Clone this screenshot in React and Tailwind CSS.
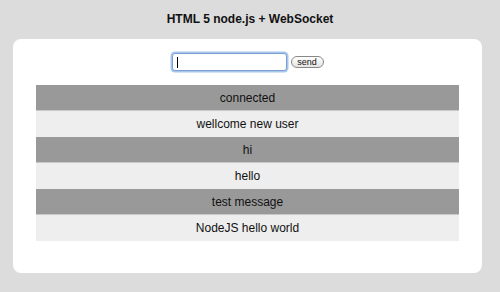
export default function App() {
  const rows = [
    "connected",
    "wellcome new user",
    "hi",
    "hello",
    "test message",
    "NodeJS hello world",
  ];
  return (
    <div
      className="w-[500px] h-[292px] bg-[#dcdcdc] flex flex-col items-center overflow-hidden"
      style={{ fontFamily: '"Liberation Sans", Arial, sans-serif' }}
    >
      <div className="h-[39px] flex items-center justify-center text-[12px] font-bold text-[#111] pb-[2px]">
        HTML 5 node.js + WebSocket
      </div>
      <div className="w-[469px] h-[234px] ml-[-5px] bg-white rounded-[8px] flex flex-col items-center pt-[14px]">
        <div className="flex items-center gap-[4px] h-[18px]">
          <div className="w-[115px] h-[18px] rounded-[3px] border border-[#7a9fd3] shadow-[0_0_0_1.5px_#a9c6ec] bg-white flex items-center pl-[4px]">
            <div className="w-[1px] h-[11px] bg-black" />
          </div>
          <div className="w-[33px] h-[12px] rounded-full border border-[#888] bg-gradient-to-b from-white to-[#e4e4e4] flex items-center justify-center text-[9px] text-[#111] leading-none">
            send
          </div>
        </div>
        <div className="w-[423px] mt-[14px] flex flex-col">
          {rows.map((r, i) => (
            <div
              key={i}
              className={
                "h-[26px] flex items-center justify-center text-[12px] text-[#111] " +
                (i % 2 === 0
                  ? "bg-[#999999] border-b border-[#c8c8c8]"
                  : "bg-[#eeeeee]")
              }
            >
              {r}
            </div>
          ))}
        </div>
      </div>
    </div>
  );
}
